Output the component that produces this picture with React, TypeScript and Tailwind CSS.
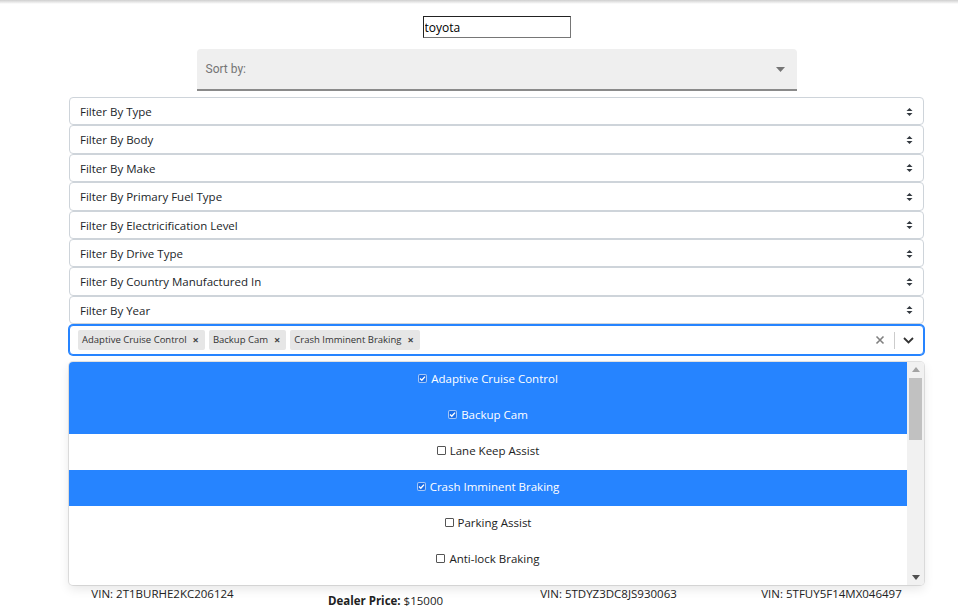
import React from 'react';

const filters = [
  'Filter By Type',
  'Filter By Body',
  'Filter By Make',
  'Filter By Primary Fuel Type',
  'Filter By Electricification Level',
  'Filter By Drive Type',
  'Filter By Country Manufactured In',
  'Filter By Year',
];

const chips = ['Adaptive Cruise Control', 'Backup Cam', 'Crash Imminent Braking'];

const options = [
  { label: 'Adaptive Cruise Control', checked: true },
  { label: 'Backup Cam', checked: true },
  { label: 'Lane Keep Assist', checked: false },
  { label: 'Crash Imminent Braking', checked: true },
  { label: 'Parking Assist', checked: false },
  { label: 'Anti-lock Braking', checked: false },
];

function SortArrows() {
  return (
    <svg width="7" height="10" viewBox="0 0 7 10" className="text-[#343a40]">
      <path d="M3.5 1 L6.5 4 L0.5 4 Z" fill="currentColor" />
      <path d="M3.5 9 L6.5 6 L0.5 6 Z" fill="currentColor" />
    </svg>
  );
}

function Check({ checked }: { checked: boolean }) {
  if (checked) {
    return (
      <span className="inline-flex items-center justify-center w-[9px] h-[9px] rounded-[2px] bg-[#1a6ee8] border border-white/60">
        <svg width="7" height="7" viewBox="0 0 7 7">
          <path d="M1 3.6 L2.8 5.3 L6 1.6" stroke="white" strokeWidth="1.4" fill="none" />
        </svg>
      </span>
    );
  }
  return <span className="inline-block w-[9px] h-[9px] rounded-[1px] border border-[#555] bg-white" />;
}

export default function App() {
  return (
    <div className="relative w-[958px] h-[607px] overflow-hidden bg-white text-[#212529]" style={{ fontFamily: '"Open Sans", "Noto Sans", sans-serif' }}>
      <div className="h-[4px] bg-gradient-to-b from-[#cfcfcf] to-white" />

      <div className="ml-[69px] w-[855px]">
        <div className="flex justify-center mt-[12px]">
          <input
            type="text"
            defaultValue="toyota"
            className="w-[148px] h-[22px] px-[1px] border border-t-[#222] border-l-[#222] border-r-[#767676] border-b-[#767676] text-[12px] text-black outline-none"
          />
        </div>

        <div className="flex justify-center mt-[11px]">
          <div className="w-[600px] h-[42px] bg-[#efefef] rounded-t-[4px] border-b-[2px] border-[#8a8a8a] flex items-center justify-between pl-[9px] pr-[12px]">
            <span className="text-[12px] text-[#757575]" style={{ fontFamily: 'Roboto, sans-serif' }}>Sort by:</span>
            <svg width="9" height="5" viewBox="0 0 9 5">
              <path d="M0 0 L9 0 L4.5 5 Z" fill="#757575" />
            </svg>
          </div>
        </div>

        <div className="mt-[6px] flex flex-col">
          {filters.map(f => (
            <div
              key={f}
              className="h-[28.4px] flex items-center justify-between pl-[10px] pr-[10px] pt-px border border-[#ced4da] rounded-[4px] bg-white text-[11.5px] text-[#212529]"
            >
              <span>{f}</span>
              <SortArrows />
            </div>
          ))}
        </div>

        <div className="relative mt-[1px]">
          <div className="h-[30px] flex items-center border border-[#2684ff] ring-1 ring-[#2684ff] rounded-[4px] bg-white pl-[8px]">
            <div className="flex-1 flex items-center gap-[4px]">
              {chips.map(c => (
                <span key={c} className="h-[20px] flex items-center bg-[#e6e6e6] rounded-[2px] text-[9.5px] text-[#333]">
                  <span className="pl-[4px] pr-[4px]">{c}</span>
                  <span className="pr-[6px] pl-[2px] text-[11px] font-bold text-[#444]">×</span>
                </span>
              ))}
            </div>
            <div className="flex items-center h-full">
              <svg width="10" height="10" viewBox="0 0 10 10" className="mr-[9px]">
                <path d="M1.5 1.5 L8.5 8.5 M8.5 1.5 L1.5 8.5" stroke="#808080" strokeWidth="1.6" />
              </svg>
              <span className="w-[1px] h-[17px] bg-[#cccccc]" />
              <svg width="11" height="7" viewBox="0 0 11 7" className="ml-[8px] mr-[9px]">
                <path d="M1 1 L5.5 5.5 L10 1" stroke="#333" strokeWidth="1.8" fill="none" />
              </svg>
            </div>
          </div>

          <div className="absolute left-0 right-0 top-[37px] z-10 h-[223px] bg-white rounded-[4px] shadow-[0_0_0_1px_rgba(0,0,0,0.1),0_4px_11px_rgba(0,0,0,0.1)] flex overflow-hidden">
            <div className="flex-1">
              {options.map(o => (
                <div
                  key={o.label}
                  className={
                    'h-[36px] flex items-center justify-center gap-[4px] pb-[3px] text-[11.5px] ' +
                    (o.checked ? 'bg-[#2684ff] text-white' : 'bg-white text-[#222]')
                  }
                >
                  <Check checked={o.checked} />
                  <span>{o.label}</span>
                </div>
              ))}
            </div>
            <div className="w-[17px] bg-[#f1f1f1] flex flex-col items-center">
              <svg width="8" height="5" viewBox="0 0 8 5" className="mt-[5px]">
                <path d="M0 5 L8 5 L4 0 Z" fill="#a3a3a3" />
              </svg>
              <div className="w-[13px] h-[62px] bg-[#c1c1c1] mt-[6px]" />
              <div className="flex-1" />
              <svg width="8" height="5" viewBox="0 0 8 5" className="mb-[5px]">
                <path d="M0 0 L8 0 L4 5 Z" fill="#505050" />
              </svg>
            </div>
          </div>
        </div>
      </div>

      <div className="ml-[51px] w-[892px] grid grid-cols-4 text-[11.5px] text-[#222] mt-[230px]">
        <div className="text-center">VIN: 2T1BURHE2KC206124</div>
        <div className="text-center pt-[7px]">
          <span className="font-bold">Dealer Price:</span> $15000
        </div>
        <div className="text-center">VIN: 5TDYZ3DC8JS930063</div>
        <div className="text-center">VIN: 5TFUY5F14MX046497</div>
      </div>
    </div>
  );
}
